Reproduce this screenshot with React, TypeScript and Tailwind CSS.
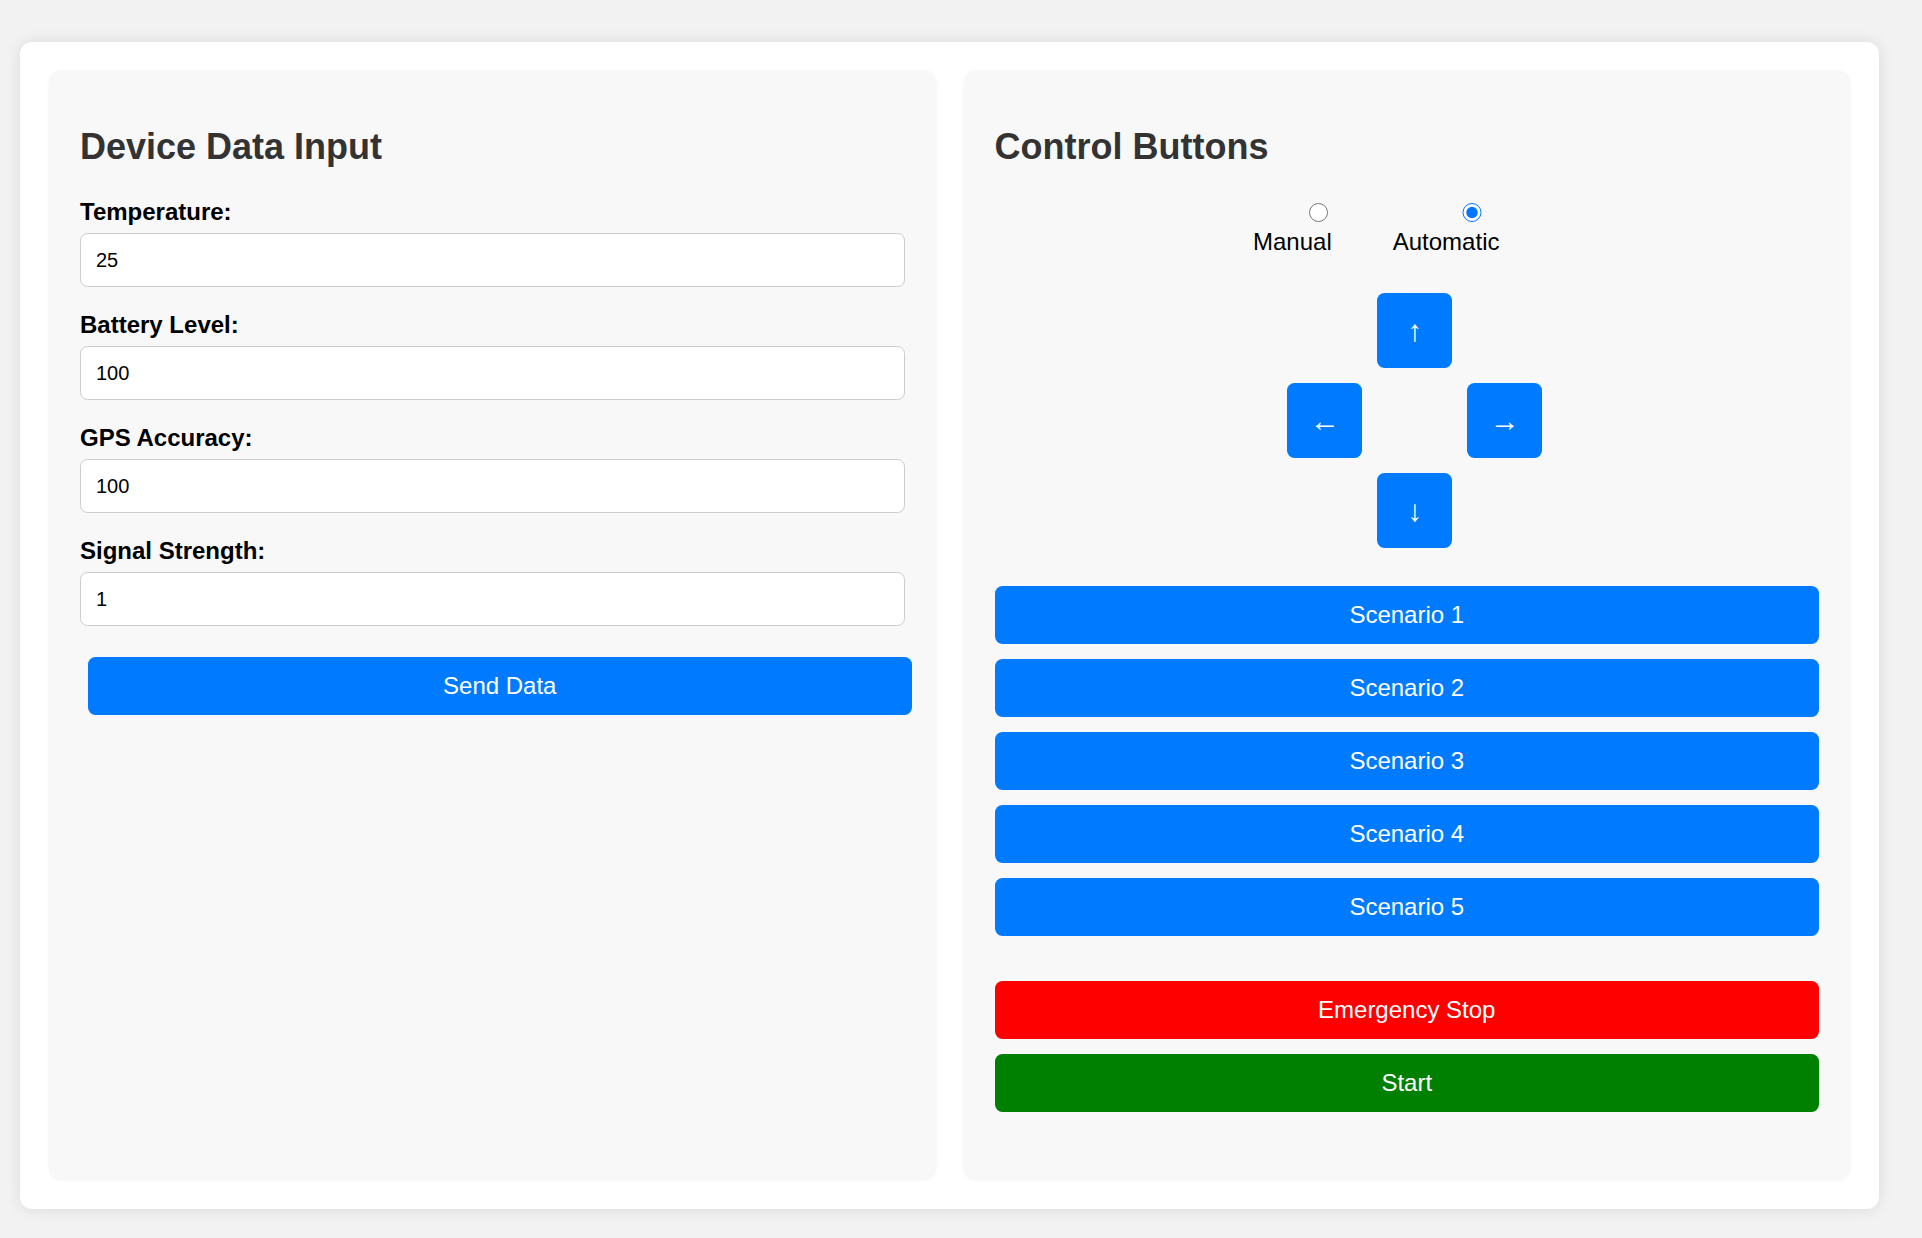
import React from "react";

const fields = [
  { label: "Temperature:", value: "25" },
  { label: "Battery Level:", value: "100" },
  { label: "GPS Accuracy:", value: "100" },
  { label: "Signal Strength:", value: "1" },
];

const scenarios = ["Scenario 1", "Scenario 2", "Scenario 3", "Scenario 4", "Scenario 5"];

function DirButton({ children }: { children: React.ReactNode }) {
  return (
    <button className="w-[75px] h-[75px] rounded-[7.5px] bg-[#007bff] text-white text-[30px] leading-[34px] flex items-center justify-center">
      {children}
    </button>
  );
}

export default function App() {
  return (
    <div
      className="min-h-screen bg-[#f2f2f2] pt-[42px] pl-[20px] text-black"
      style={{ fontFamily: '"Liberation Sans", Arial, Helvetica, sans-serif' }}
    >
      <div className="w-[1859px] h-[1167px] bg-white rounded-[12px] shadow-[0_0_15px_rgba(0,0,0,0.1)] p-[30px] flex gap-[30px]">
        {/* Left panel */}
        <div className="flex-1 bg-[#f8f8f8] rounded-[10px] shadow-[0_0_4px_rgba(0,0,0,0.08)] px-[30px] pt-[30px]">
          <h2 className="mt-[24px] mb-[31px] text-[36px] leading-[41px] font-bold text-[#333]">Device Data Input</h2>
          {fields.map((f) => (
            <div key={f.label} className="pb-[24px]">
              <label className="block text-[24px] leading-[28px] font-bold text-black">{f.label}</label>
              <input
                type="text"
                readOnly
                value={f.value}
                className="block w-full mt-[7px] h-[54px] bg-white border-[1.5px] border-[#ccc] rounded-[7.5px] pl-[15px] text-[20px] text-black outline-none"
              />
            </div>
          ))}
          <button className="block w-full ml-[7.5px] mt-[7px] h-[58px] rounded-[7.5px] bg-[#007bff] text-white text-[24px]">
            Send Data
          </button>
        </div>

        {/* Right panel */}
        <div className="flex-1 bg-[#f8f8f8] rounded-[10px] shadow-[0_0_4px_rgba(0,0,0,0.08)] px-[30px] pt-[30px]">
          <h2 className="mt-[24px] mb-[31px] text-[36px] leading-[41px] font-bold text-[#333]">Control Buttons</h2>

          <div className="flex justify-center">
            <label className="flex flex-col items-center mr-[61px]">
              <span className="h-[30px] pt-[4.5px] flex">
                <input type="radio" name="mode" readOnly className="w-[19.5px] h-[19.5px] m-0 ml-[52px] accent-[#0075ff]" />
              </span>
              <span className="text-[24px] leading-[28px] text-black">Manual</span>
            </label>
            <label className="flex flex-col items-center mr-[61px]">
              <span className="h-[30px] pt-[4.5px] flex">
                <input type="radio" name="mode" checked readOnly className="w-[19.5px] h-[19.5px] m-0 ml-[52px] accent-[#0075ff]" />
              </span>
              <span className="text-[24px] leading-[28px] text-black">Automatic</span>
            </label>
          </div>

          <div className="flex justify-center mt-[37px] pl-[16px]">
            <div className="grid grid-cols-[75px_75px_75px] grid-rows-[75px_75px_75px] gap-[15px]">
              <div />
              <DirButton>↑</DirButton>
              <div />
              <DirButton>←</DirButton>
              <div />
              <DirButton>→</DirButton>
              <div />
              <DirButton>↓</DirButton>
              <div />
            </div>
          </div>

          <div className="mt-[38px] flex flex-col gap-[15px]">
            {scenarios.map((s) => (
              <button key={s} className="w-full h-[58px] rounded-[7.5px] bg-[#007bff] text-white text-[24px]">
                {s}
              </button>
            ))}
          </div>

          <div className="mt-[45px] flex flex-col gap-[15px]">
            <button className="w-full h-[58px] rounded-[7.5px] bg-[#ff0000] text-white text-[24px]">Emergency Stop</button>
            <button className="w-full h-[58px] rounded-[7.5px] bg-[#008000] text-white text-[24px]">Start</button>
          </div>
        </div>
      </div>
    </div>
  );
}
